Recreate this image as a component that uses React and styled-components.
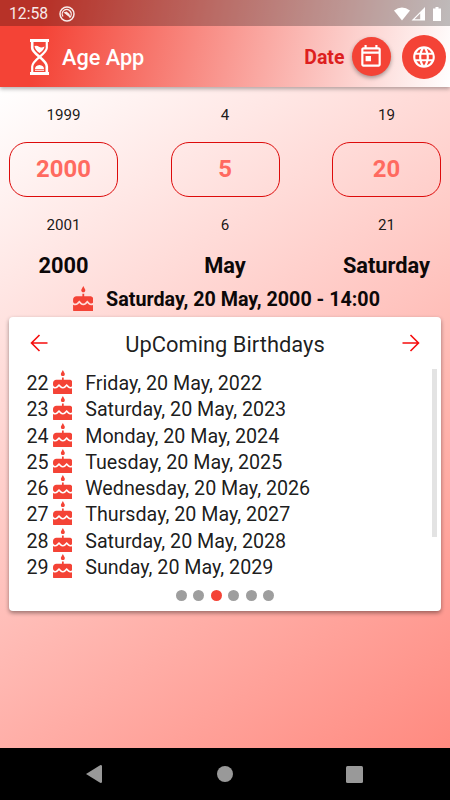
import React from 'react';
import styled, { createGlobalStyle } from 'styled-components';
import { MdLanguage } from 'react-icons/md';

const GlobalStyle = createGlobalStyle`
  body {
    margin: 0;
    font-family: Roboto, sans-serif;
    color: rgba(0, 0, 0, 0.9);
  }

  * {
    box-sizing: border-box;
  }

  svg {
    display: block;
  }
`;

const Screen = styled.div`
  width: 450px;
  height: 800px;
  display: flex;
  flex-direction: column;
  overflow: hidden;
`;

const Top = styled.header`
  height: 87px;
  flex-shrink: 0;
  position: relative;
  background: linear-gradient(100.9deg, #f44336 10%, #fff 100%);
  box-shadow: 0 2px 4px rgba(0, 0, 0, 0.3);
`;

const StatusBar = styled.div`
  height: 26px;
  display: flex;
  align-items: center;
  padding: 1px 7px 0 9px;
  background: rgba(0, 0, 0, 0.25);
  color: #fff;
`;

const Clock = styled.span`
  width: 49px;
  font-size: 15.7px;
  opacity: 0.9;
`;

const StatusIcons = styled.div`
  display: flex;
  margin-left: auto;
`;

const Toolbar = styled.div`
  height: 61px;
  display: flex;
  align-items: center;
  padding: 0 4px 0 30px;
`;

const Title = styled.h1`
  margin: 0 auto 0 13px;
  padding-top: 2px;
  font-size: 21.7px;
  font-weight: 500;
  color: #fff;
`;

const DateLabel = styled.span`
  margin-right: 7px;
  padding-top: 2px;
  font-size: 19.5px;
  font-weight: 700;
  color: #dd1f1f;
`;

const RoundButton = styled.button`
  width: ${props => props.$size}px;
  height: ${props => props.$size}px;
  margin-right: ${props => props.$gap || 0}px;
  display: flex;
  align-items: center;
  justify-content: center;
  padding: 0;
  border: 0;
  border-radius: 50%;
  background: #f44336;
  color: #fff;
  box-shadow: ${props => (props.$raised ? '0 2px 4px rgba(0, 0, 0, 0.35)' : 'none')};
`;

const Main = styled.main`
  flex: 1;
  padding: 0 9px;
  background: linear-gradient(145.8deg, #fff, #ff8a80);
`;

const Pickers = styled.div`
  display: flex;
  justify-content: space-between;
  padding-top: 1px;
`;

const Picker = styled.div`
  width: 109px;
  display: flex;
  flex-direction: column;
  align-items: center;
`;

const PickerOption = styled.div`
  height: 54px;
  line-height: ${props => (props.$after ? 56 : 54)}px;
  font-size: 15.2px;
`;

const PickerValue = styled.div`
  width: 109px;
  height: 55px;
  line-height: 53px;
  border: 1px solid #dd0b0b;
  border-radius: 18px;
  text-align: center;
  font-size: 23.9px;
  font-weight: 700;
  color: #ff6a60;
`;

const PickerLabel = styled.div`
  height: 27px;
  line-height: 29px;
  font-size: 21.8px;
  font-weight: 700;
  color: #0c0808;
`;

const Birthday = styled.div`
  height: 39px;
  display: flex;
  align-items: center;
  padding: 2px 0 0 63.5px;
  color: #f44336;
`;

const BirthdayText = styled.strong`
  margin-left: 13px;
  padding-top: 1px;
  font-size: 19.7px;
  color: #0c0808;
`;

const Card = styled.section`
  height: 294px;
  border-radius: 4px;
  background: #fff;
  box-shadow: 0 2px 4px rgba(0, 0, 0, 0.4);
`;

const CardHeader = styled.div`
  height: 52px;
  display: flex;
  align-items: center;
  justify-content: space-between;
  padding: 0 21px;
  color: #f60c0c;
`;

const CardTitle = styled.h2`
  margin: 0;
  padding-top: 2px;
  font-size: 21.9px;
  font-weight: 400;
  color: rgba(0, 0, 0, 0.88);
`;

const ListArea = styled.div`
  height: 210px;
  display: flex;
  justify-content: space-between;
  padding: 0 4px 0 17.5px;
`;

const Row = styled.div`
  height: 26.25px;
  display: flex;
  align-items: center;
  font-size: 19.7px;
  white-space: nowrap;
  color: #f44336;
`;

const Age = styled.span`
  width: 26px;
  padding-top: 3px;
  color: rgba(0, 0, 0, 0.9);
`;

const RowText = styled.span`
  margin-left: 13px;
  padding-top: 3px;
  color: rgba(0, 0, 0, 0.9);
`;

const ScrollThumb = styled.div`
  width: 5px;
  height: 168px;
  background: #e3e3e3;
`;

const Dots = styled.div`
  display: flex;
  justify-content: center;
  gap: 6.5px;
  padding-top: 11px;
`;

const Dot = styled.span`
  width: 11px;
  height: 11px;
  border-radius: 50%;
  background: ${props => (props.$active ? '#f44336' : '#9e9e9e')};
`;

const NavBar = styled.nav`
  height: 52px;
  display: flex;
  align-items: center;
  justify-content: space-between;
  padding: 0 87px 0 86px;
  background: #000;
  color: #999;
`;

const Cake = ({ width = 19.7, height = 24 }) => (
  <svg width={width} height={height} viewBox="3 0 18 22" fill="currentColor">
    <path d="M12 5.600c1 0 1.800-.8 1.800-1.800 0-.4-.1-.7-.3-1L12 0l-1.500 2.800c-.2.3-.3.600-.3 1 0 1 .8 1.800 1.800 1.800z" />
    <path d="M18 9h-5.200V6.800h-1.600V9H6c-1.660 0-3 1.340-3 3v1.540c0 1.080.88 1.960 1.960 1.960.52 0 1.020-.2 1.380-.57l2.140-2.130 2.130 2.130c.74.74 2.030.74 2.770 0l2.140-2.130 2.130 2.130c.37.370.86.570 1.380.570 1.080 0 1.960-.88 1.960-1.960V12c.01-1.660-1.330-3-2.990-3z" />
    <path d="M16.600 15.990l-1.070-1.070-1.080 1.070c-1.300 1.300-3.580 1.310-4.890 0l-1.070-1.070-1.090 1.070C6.750 16.640 5.880 17 4.960 17c-.73 0-1.400-.23-1.960-.61V21.600c0 .2.200.4.400.4h17.200c.2 0 .4-.2.400-.4v-5.210c-.56.38-1.230.61-1.960.61-.92 0-1.790-.36-2.440-1.010z" />
  </svg>
);

const Hourglass = () => (
  <svg width="19" height="36" viewBox="0 0 19 36">
    <path d="M0 0h19v3H0zM0 33h19v3H0z" fill="#fff" />
    <path d="M2.200 2v7C2.200 15 16.800 20.500 16.800 27.500V34" fill="none" stroke="#fff" strokeWidth="2.600" />
    <path d="M16.800 2v7C16.800 15 2.200 20.500 2.200 27.500V34" fill="none" stroke="#fff" strokeWidth="2.200" />
    <path d="M4.500 7q2.500-1 4.500.7t5.500-.2q-.5 3.500-5 6.500Q5 11 4.500 7zM5 30q0-3.500 4.500-4 4.500.5 4.500 4zM5 30.800h9v1H5z" fill="#fff" />
  </svg>
);

const TodayIcon = () => (
  <svg width="26" height="26" viewBox="0 0 24 24" fill="currentColor">
    <path d="M19 3h-1V1h-2v2H8V1H6v2H5c-1.110 0-1.990.9-1.990 2L3 19c0 1.100.89 2 2 2h14c1.100 0 2-.9 2-2V5c0-1.100-.9-2-2-2zm0 16H5V9h14v10zm0-12H5V5h14v2zM7 11h5v5H7z" />
  </svg>
);

const Arrow = ({ forward }) => (
  <svg width="18" height="18" viewBox="0 0 18 18" fill="none" stroke="currentColor" strokeWidth="1.600">
    <path d={forward ? 'M.5 9h16M8.500 1l8 8-8 8' : 'M17.500 9h-16M9.500 1l-8 8 8 8'} />
  </svg>
);

const pickers = [
  { before: '1999', value: '2000', after: '2001', label: '2000' },
  { before: '4', value: '5', after: '6', label: 'May' },
  { before: '19', value: '20', after: '21', label: 'Saturday' }
];

const days = ['Friday', 'Saturday', 'Monday', 'Tuesday', 'Wednesday', 'Thursday', 'Saturday', 'Sunday'];

const App = () => (
  <Screen>
    <GlobalStyle />

    <Top>
      <StatusBar>
        <Clock>12:58</Clock>
        <svg width="18" height="18" viewBox="0 0 18 18" fill="none" stroke="#fff" opacity="0.9">
          <circle cx="9" cy="9" r="7" strokeWidth="1.500" />
          <path d="M5 11.500A4.500 4.500 0 1 1 11.500 12.500" strokeWidth="1.300" />
          <path d="M5.500 7.500l7 5.500-1-4-3-2.500z" fill="#fff" stroke="none" />
        </svg>

        <StatusIcons>
          <svg width="49" height="16" viewBox="0 0 49 16" fill="#fff">
            <path d="M0 4.500Q8 -1.500 16 4.500L8 14.500z" />
            <path d="M31 1v13.500H17.500zM29.800 3.800L20.500 13.300h5.700V7.400z" fillRule="evenodd" />
            <path d="M41.500 1h3v1.500h2.500V15h-8V2.500h2.500z" />
          </svg>
        </StatusIcons>
      </StatusBar>

      <Toolbar>
        <Hourglass />
        <Title>Age App</Title>
        <DateLabel>Date</DateLabel>
        <RoundButton $size={39} $gap={11.5} $raised>
          <TodayIcon />
        </RoundButton>
        <RoundButton $size={44}>
          <MdLanguage size={26} />
        </RoundButton>
      </Toolbar>
    </Top>

    <Main>
      <Pickers>
        {pickers.map(picker => (
          <Picker key={picker.label}>
            <PickerOption>{picker.before}</PickerOption>
            <PickerValue>{picker.value}</PickerValue>
            <PickerOption $after>{picker.after}</PickerOption>
            <PickerLabel>{picker.label}</PickerLabel>
          </Picker>
        ))}
      </Pickers>

      <Birthday>
        <Cake width={20.6} height={25} />
        <BirthdayText>Saturday, 20 May, 2000 - 14:00</BirthdayText>
      </Birthday>

      <Card>
        <CardHeader>
          <Arrow />
          <CardTitle>UpComing Birthdays</CardTitle>
          <Arrow forward />
        </CardHeader>

        <ListArea>
          <div>
            {days.map((day, i) => (
              <Row key={i}>
                <Age>{22 + i}</Age>
                <Cake />
                <RowText>{`${day}, 20 May, ${2022 + i}`}</RowText>
              </Row>
            ))}
          </div>
          <ScrollThumb />
        </ListArea>

        <Dots>
          {[0, 1, 2, 3, 4, 5].map(n => (
            <Dot key={n} $active={n === 2} />
          ))}
        </Dots>
      </Card>
    </Main>

    <NavBar>
      <svg width="16" height="18" viewBox="0 0 16 18" fill="currentColor">
        <path d="M0 9L14.500 0q1.500 0 1.500 1v16q0 1-1.500 1z" />
      </svg>
      <svg width="18" height="16" viewBox="0 0 18 16" fill="currentColor">
        <circle cx="10" cy="8" r="8" />
      </svg>
      <svg width="17" height="17" viewBox="0 0 17 17" fill="currentColor">
        <rect width="17" height="17" rx="1.500" />
      </svg>
    </NavBar>
  </Screen>
);

export default App;
